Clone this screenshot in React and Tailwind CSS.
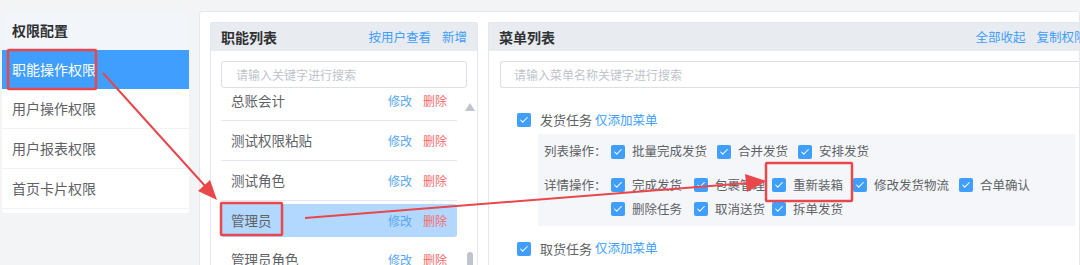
import { Check } from 'lucide-react'

const font = { fontFamily: '"Noto Sans CJK SC", "Noto Sans", sans-serif' }

const Box = ({ className = '' }) => (
  <span className={`inline-flex w-[14px] h-[14px] shrink-0 items-center justify-center rounded-[2px] bg-[#409eff] ${className}`}>
    <Check className="w-[10px] h-[10px] text-white" strokeWidth={2.5} />
  </span>
)

const Item = ({ label }) => (
  <span className="flex items-center">
    <Box />
    <span className="ml-[7px] text-[12.5px] text-[#606266] whitespace-nowrap">{label}</span>
  </span>
)

const roles = ['总账会计', '测试权限粘贴', '测试角色', '管理员', '管理员角色']

const App = () => {
  return (
    <div className="relative w-[1080px] h-[265px] overflow-hidden bg-[#f3f4f6]" style={font}>
      <div className="flex pt-[11px] pl-[2px] gap-[10px] items-start">
        {/* left nav */}
        <div className="w-[187px] h-[202px] shrink-0 rounded-[3px] bg-white overflow-hidden">
          <div className="h-[39px] bg-[#f2f5fa] flex items-center pl-[10px] text-[14px] font-bold text-[#303133]">权限配置</div>
          <div className="h-[39px] bg-[#409eff] flex items-center pl-[10px] text-[14px] text-white">职能操作权限</div>
          {['用户操作权限', '用户报表权限', '首页卡片权限'].map((t) => (
            <div key={t} className="h-[40px] border-b border-[#f0f2f5] flex items-center pl-[10px] text-[14px] text-[#606266]">{t}</div>
          ))}
        </div>

        {/* main card */}
        <div className="flex-1 min-w-0 h-[270px] bg-white border border-[#e6e8ec] rounded-[3px] pt-[10px] pl-[10px] flex gap-[10px]">
          {/* role list */}
          <div className="w-[268px] shrink-0 border border-[#e4e7ed] rounded-[2px]">
            <div className="h-[28px] bg-[#e8ebf0] flex items-center justify-between px-[10px]">
              <span className="text-[14px] font-bold text-[#303133]">职能列表</span>
              <span className="flex gap-[11px] text-[12.5px] text-[#409eff]">
                <span>按用户查看</span>
                <span>新增</span>
              </span>
            </div>
            <div className="px-[10px] pt-[10px]">
              <div className="h-[27px] border border-[#dcdfe6] rounded-[3px] flex items-center pl-[14px] text-[12px] text-[#c0c4cc]">请输入关键字进行搜索</div>
            </div>
            <div className="relative h-[200px] mt-[7px] overflow-hidden">
              <div className="-mt-[14px] pl-[10px] pr-[20px]">
                {roles.map((r) => {
                  const sel = r === '管理员'
                  return (
                    <div
                      key={r}
                      className={`flex items-center justify-between pl-[10px] pr-[10px] ${sel ? 'h-[33px] my-[3px] bg-[#b3d8ff] rounded-[3px]' : 'h-[40px] border-b border-[#e4e7ed]'}`}
                    >
                      <span className="text-[13.5px] text-[#606266]">{r}</span>
                      <span className="flex gap-[11px] text-[12px]">
                        <span className="text-[#5aa7f5]">修改</span>
                        <span className="text-[#f56c6c]">删除</span>
                      </span>
                    </div>
                  )
                })}
              </div>
              <div className="absolute right-[2px] top-[8px] w-0 h-0 border-l-[5px] border-r-[5px] border-b-[8px] border-l-transparent border-r-transparent border-b-[#c0c4cc]" />
              <div className="absolute right-[4px] top-[157px] w-[6px] h-[20px] rounded-[3px] bg-[#c0c4cc]" />
            </div>
          </div>

          {/* menu list */}
          <div className="flex-1 min-w-0 border border-[#e4e7ed] border-r-0 rounded-l-[2px]">
            <div className="h-[28px] bg-[#e8ebf0] flex items-center justify-between pl-[10px]">
              <span className="text-[14px] font-bold text-[#303133]">菜单列表</span>
              <span className="flex gap-[11px] text-[12.5px] text-[#409eff] whitespace-nowrap -mr-[20px]">
                <span>全部收起</span>
                <span>复制权限至</span>
              </span>
            </div>
            <div className="pl-[11px] pt-[10px]">
              <div className="h-[27px] border border-[#dcdfe6] border-r-0 rounded-l-[3px] flex items-center pl-[13px] text-[12px] text-[#c0c4cc]">请输入菜单名称关键字进行搜索</div>
            </div>
            <div className="pl-[28px] pt-[24px] pr-[4px]">
              <div className="flex items-center h-[16px]">
                <Box />
                <span className="ml-[9px] text-[13px] text-[#606266]">发货任务</span>
                <span className="ml-[3px] text-[12.5px] text-[#409eff]">仅添加菜单</span>
              </div>
              <div className="ml-[21px] mt-[6px] bg-[#f4f6fa] pt-[9px] pb-[7px] pl-[6px]">
                <div className="flex items-center h-[17px]">
                  <span className="w-[67px] text-[12.5px] text-[#606266]">列表操作：</span>
                  <span className="flex items-center gap-[10px]">
                    <Item label="批量完成发货" />
                    <Item label="合并发货" />
                    <Item label="安排发货" />
                  </span>
                </div>
                <div className="flex items-start mt-[16px]">
                  <span className="w-[67px] text-[12.5px] leading-[17px] text-[#606266]">详情操作：</span>
                  <div className="grid grid-cols-[83px_78px_81px_106px_auto] gap-y-[5px]">
                    <Item label="完成发货" />
                    <Item label="包裹管理" />
                    <Item label="重新装箱" />
                    <Item label="修改发货物流" />
                    <Item label="合单确认" />
                    <Item label="删除任务" />
                    <Item label="取消送货" />
                    <Item label="拆单发货" />
                  </div>
                </div>
              </div>
              <div className="flex items-center h-[16px] mt-[15px]">
                <Box />
                <span className="ml-[9px] text-[13px] text-[#606266]">取货任务</span>
                <span className="ml-[3px] text-[12.5px] text-[#409eff]">仅添加菜单</span>
              </div>
            </div>
          </div>
        </div>
      </div>

      {/* annotations */}
      <svg className="absolute inset-0 pointer-events-none" width="1080" height="265">
        <rect x="8" y="50" width="88" height="39" fill="none" stroke="#e8474b" strokeWidth="2.5" rx="1" />
        <rect x="221" y="203" width="61" height="32" fill="none" stroke="#e8474b" strokeWidth="2.5" rx="1" />
        <rect x="766" y="163" width="86" height="38" fill="none" stroke="#e8474b" strokeWidth="2.5" rx="1" />
        <line x1="103" y1="73" x2="206" y2="187" stroke="#e8474b" strokeWidth="2" />
        <polygon points="217,200 198,191 210,180" fill="#e8474b" />
        <line x1="305" y1="218" x2="748" y2="183" stroke="#e8474b" strokeWidth="2" />
        <polygon points="766,181 745,174 747,192" fill="#e8474b" />
      </svg>
    </div>
  )
}

export default App
